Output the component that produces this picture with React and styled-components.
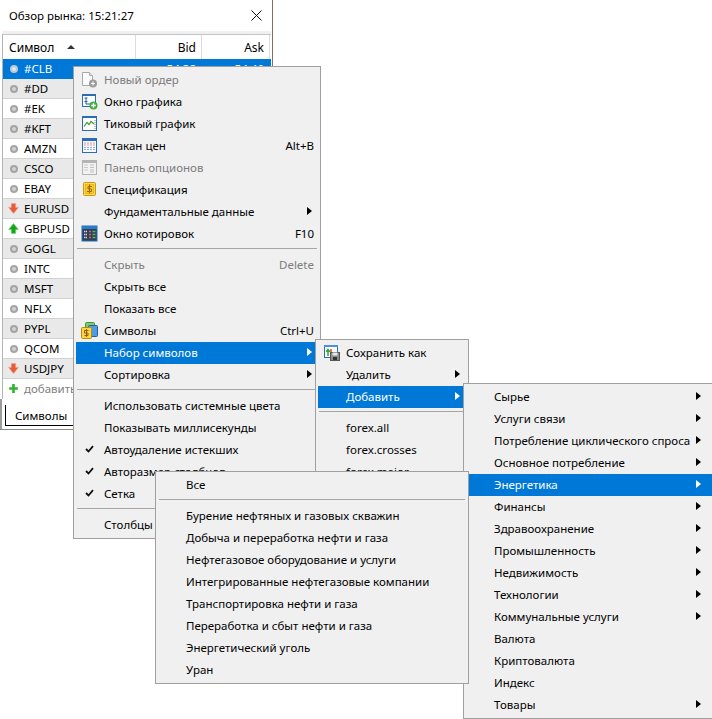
import React from 'react';
import styled, { createGlobalStyle } from 'styled-components';

const GlobalStyle = createGlobalStyle`
  html, body {
    margin: 0;
    padding: 0;
    background: #fff;
  }
`;

const Page = styled.div`
  position: relative;
  width: 712px;
  height: 719px;
  overflow: hidden;
  background: #fff;
  font-family: 'Noto Sans', 'Open Sans', sans-serif;
  font-size: 11.5px;
  color: #000;
`;

const Window = styled.div`
  width: 273px;
  height: 430px;
  box-sizing: border-box;
  display: flex;
  flex-direction: column;
  background: #fff;
  border-right: 1px solid #8d6a6a;
  border-bottom: 1px solid #8a8a8a;
`;

const TitleBar = styled.div`
  height: 31px;
  flex: none;
  display: flex;
  align-items: center;
  justify-content: space-between;
  padding: 0 10px 0 9px;
`;

const Table = styled.div`
  margin: 3px 0 0 2px;
  width: 268px;
  border-left: 1px solid #b4b4b4;
  box-shadow: 0 -3px 0 #f0f0f0;
`;

const HeaderRow = styled.div`
  height: 25px;
  display: grid;
  grid-template-columns: 133px 66px 68px;
  border-top: 1px solid #c4c4c4;
  box-sizing: border-box;
`;

const HeaderCell = styled.div`
  display: flex;
  align-items: center;
  justify-content: ${p => (p.$right ? 'flex-end' : 'flex-start')};
  padding: 0 5px 0 6px;
  border-right: 1px solid #dcdcdc;
  font-size: 12px;
`;

const SortArrow = styled.span`
  margin-left: 13px;
  width: 0;
  height: 0;
  border-left: 4px solid transparent;
  border-right: 4px solid transparent;
  border-bottom: 4px solid #333;
`;

const Row = styled.div`
  height: 20px;
  box-sizing: border-box;
  display: grid;
  grid-template-columns: 133px 66px 68px;
  align-items: center;
  background: ${p => (p.$selected ? '#0078d7' : p.$shade ? '#e9e9e9' : '#fff')};
  color: ${p => (p.$selected ? '#fff' : p.$muted ? '#808080' : '#000')};
  border-bottom: 1px solid ${p => (p.$selected ? '#0078d7' : p.$last ? '#fff' : '#d2d2d2')};
`;

const SymbolCell = styled.div`
  display: flex;
  align-items: center;
`;

const RowIcon = styled.span`
  width: 21px;
  display: flex;
  justify-content: center;
  flex: none;
`;

const Value = styled.div`
  text-align: right;
  padding-right: 6px;
`;

const Bullet = styled.span`
  width: 8px;
  height: 8px;
  box-sizing: border-box;
  border-radius: 50%;
  background: ${p => (p.$selected ? '#e6e6e6' : '#d2d2d2')};
  border: 2px solid ${p => (p.$selected ? '#b8c8d8' : '#a4a4a4')};
`;

const TabStrip = styled.div`
  flex: 1;
  display: flex;
  align-items: flex-start;
  padding: 6px 0 0 5px;
  border-left: 2px solid #9c9c9c;
`;

const Tab = styled.div`
  width: 90px;
  height: 20px;
  padding-left: 9px;
  display: flex;
  align-items: center;
  border-left: 1px solid #000;
  border-bottom: 1px solid #000;
  margin-left: -2px;
`;

const Menu = styled.div`
  position: absolute;
  left: ${p => p.$left}px;
  top: ${p => p.$top}px;
  width: ${p => p.$width}px;
  z-index: ${p => p.$layer};
  box-sizing: border-box;
  padding: 2px;
  background: #f0f0f0;
  border: 1px solid #a0a0a0;
`;

const Item = styled.div`
  position: relative;
  height: 22px;
  box-sizing: border-box;
  padding-bottom: 2px;
  display: flex;
  align-items: center;
  justify-content: space-between;
  background: ${p => (p.$active ? '#0078d7' : 'transparent')};
  color: ${p => (p.$active ? '#fff' : p.$disabled ? '#7c7c7c' : '#000')};
`;

const Label = styled.span`
  display: flex;
  align-items: center;
  white-space: nowrap;
`;

const IconSlot = styled.span`
  width: 26px;
  margin-right: 2px;
  height: 20px;
  flex: none;
  display: flex;
  align-items: center;
  justify-content: center;
`;

const Shortcut = styled.span`
  padding-right: 4px;
  color: inherit;
`;

const Arrow = styled.span`
  margin-right: ${p => p.$inset || 6}px;
  width: 0;
  height: 0;
  border-top: 4px solid transparent;
  border-bottom: 4px solid transparent;
  border-left: 5px solid ${p => (p.$active ? '#fff' : '#000')};
`;

const Separator = styled.div`
  height: 9px;
  box-sizing: border-box;
  padding: 3px 1px 0;

  &::before {
    content: '';
    display: block;
    height: 1px;
    background: #a6a6a6;
  }
`;

const CloseIcon = () => (
  <svg width="11" height="11" viewBox="0 0 11 11">
    <path d="M.5.5l10 10M10.500.5l-10 10" stroke="#111" strokeWidth="1" fill="none" />
  </svg>
);

const DownArrow = () => (
  <svg width="11" height="11" viewBox="0 0 10 10">
    <path d="M3 .5h4v3.500h2.500L5 9.500.5 4H3z" fill="#e8593a" stroke="#f2a490" strokeWidth=".6" />
  </svg>
);

const UpArrow = () => (
  <svg width="11" height="11" viewBox="0 0 10 10">
    <path d="M5 .5L9.500 6H7v3.500H3V6H.5z" fill="#16a516" stroke="#7fd27f" strokeWidth=".6" />
  </svg>
);

const PlusIcon = () => (
  <svg width="11" height="11" viewBox="0 0 10 10">
    <path d="M3.800 1h2.400v2.800H9v2.400H6.200V9H3.800V6.200H1V3.800h2.800z" fill="#2fb52f" />
  </svg>
);

const Check = () => (
  <svg width="9" height="8" viewBox="0 0 9 8">
    <path d="M1 4l2.500 2.500L8 1.200" stroke="#111" strokeWidth="1.800" fill="none" />
  </svg>
);

const Svg = ({ children }) => (
  <svg width="17" height="17" viewBox="0 0 17 17">{children}</svg>
);

const NewOrderIcon = () => (
  <Svg>
    <path d="M1.500 1.500h7l3 3v10h-10z" fill="#fbfbfb" stroke="#a8a8a8" />
    <path d="M8.500 1.500v3h3" fill="#e4e4e4" stroke="#a8a8a8" />
    <circle cx="12" cy="12.500" r="4" fill="#9c9c9c" />
    <path d="M12 10.500v4M10 12.500h4" stroke="#f4f4f4" strokeWidth="1.200" />
  </Svg>
);

const ChartIcon = () => (
  <Svg>
    <rect x="1.500" y="1.500" width="13" height="12" fill="#fff" stroke="#2a6db5" />
    <rect x="1" y="1" width="14" height="2" fill="#2a6db5" />
    <path d="M5 5v6h5M3.500 5h3M3.500 8.500h3" stroke="#1f5da8" fill="none" />
    <circle cx="12.500" cy="12.500" r="4" fill="#3fae3f" />
    <path d="M12.500 10.200v4.600M10.200 12.500h4.600" stroke="#fff" strokeWidth="1.400" />
  </Svg>
);

const TickIcon = () => (
  <Svg>
    <rect x="1.500" y="1.500" width="14" height="14" fill="#fdfdfd" stroke="#2a6db5" />
    <rect x="1" y="1" width="15" height="2" fill="#2a6db5" />
    <path d="M3 11.500l3-4 2 2 2-3 3 2.500" stroke="#3f9f2f" strokeWidth="1.200" fill="none" />
    <path d="M14 5v9" stroke="#8a8a8a" strokeDasharray="1 1" />
  </Svg>
);

const DepthIcon = () => (
  <Svg>
    <rect x="1.500" y="1.500" width="14" height="14" fill="#f4f7fb" stroke="#2a6db5" />
    <rect x="1" y="1" width="15" height="3" fill="#2a6db5" />
    <path d="M3 6h11M3 8h11" stroke="#e79b9b" strokeDasharray="2 1" />
    <path d="M3 10.500h11M3 12.500h11" stroke="#8fb0dc" strokeDasharray="2 1" />
  </Svg>
);

const OptionsIcon = () => (
  <Svg>
    <rect x="1.500" y="1.500" width="14" height="14" fill="#f2f2f2" stroke="#b4b4b4" />
    <rect x="1" y="1" width="15" height="3" fill="#b4b4b4" />
    <path d="M3.500 6h3M3.500 8.500h3M3.500 11h3" stroke="#a0a0a0" strokeDasharray="1 1" />
    <path d="M9.500 6h4M9.500 8.500h4M9.500 11h4M9.500 13h4" stroke="#8c8c8c" strokeDasharray="1 1" />
  </Svg>
);

const SpecIcon = () => (
  <Svg>
    <rect x="2.500" y="1.500" width="12" height="13" rx="1" fill="#ffd94a" stroke="#c79a16" />
    <rect x="4.500" y="3.500" width="8" height="9" fill="#f7c92e" stroke="#e3ab16" strokeWidth=".7" />
    <path d="M11 5.500H7v2.500h3.500v2.500H6M8.500 3.500v9" stroke="#9a6c08" fill="none" />
  </Svg>
);

const QuotesIcon = () => (
  <Svg>
    <rect x="1" y="1" width="15" height="15" fill="#2f3f58" stroke="#2a6db5" />
    <rect x="1" y="1" width="15" height="3" fill="#2a7cc7" />
    <path d="M3 6.500h3M3 9.500h3M3 12.500h3" stroke="#d8d8d8" strokeWidth="1.500" strokeDasharray="1.500 .5" />
    <path d="M8 6.500h2M8 9.500h2M8 12.500h2" stroke="#e26060" strokeWidth="1.500" />
    <path d="M11.500 6.500h3M11.500 9.500h3M11.500 12.500h3" stroke="#53b56a" strokeWidth="1.500" />
  </Svg>
);

const SymbolsIcon = () => (
  <Svg>
    <rect x="4.500" y=".5" width="9" height="8" rx="1" fill="#7ecb6a" stroke="#3a9a3a" />
    <rect x="7.500" y="3.500" width="9" height="11" rx="1" fill="#4f9ce0" stroke="#1f5da8" />
    <rect x=".5" y="5.500" width="10" height="11" rx="1" fill="#ffd24a" stroke="#b78a10" />
    <path d="M7.500 8.500h-4v2.500h3.500v2.500H3.500M5.500 7v8" stroke="#8a6408" fill="none" />
  </Svg>
);

const SaveAsIcon = () => (
  <Svg>
    <rect x="1.500" y="1.500" width="13" height="12" fill="#fff" stroke="#2a6db5" />
    <rect x="1" y="1" width="14" height="2" fill="#4b93d6" />
    <path d="M5 12V6M3.200 7.800L5 5.500l1.800 2.300" stroke="#2ea52e" strokeWidth="1.500" fill="none" />
    <path d="M8 5v5" stroke="#d84a3a" strokeWidth="1.500" />
    <rect x="7.500" y="8.500" width="9" height="8" fill="#8c8c8c" stroke="#555" />
    <rect x="9.500" y="8.500" width="5" height="3" fill="#e8e8e8" />
    <rect x="10" y="13" width="4" height="3" fill="#333" />
  </Svg>
);

const bullet = 'bullet';
const symbols = [
  ['#CLB', bullet], ['#DD', bullet], ['#EK', bullet], ['#KFT', bullet], ['AMZN', bullet],
  ['CSCO', bullet], ['EBAY', bullet], ['EURUSD', 'down'], ['GBPUSD', 'up'], ['GOGL', bullet],
  ['INTC', bullet], ['MSFT', bullet], ['NFLX', bullet], ['PYPL', bullet], ['QCOM', bullet],
  ['USDJPY', 'down'],
];

const mainMenu = [
  { text: 'Новый ордер', icon: <NewOrderIcon />, disabled: true },
  { text: 'Окно графика', icon: <ChartIcon /> },
  { text: 'Тиковый график', icon: <TickIcon /> },
  { text: 'Стакан цен', icon: <DepthIcon />, shortcut: 'Alt+B' },
  { text: 'Панель опционов', icon: <OptionsIcon />, disabled: true },
  { text: 'Спецификация', icon: <SpecIcon /> },
  { text: 'Фундаментальные данные', sub: true },
  { text: 'Окно котировок', icon: <QuotesIcon />, shortcut: 'F10' },
  { sep: true },
  { text: 'Скрыть', shortcut: 'Delete', disabled: true },
  { text: 'Скрыть все' },
  { text: 'Показать все' },
  { text: 'Символы', icon: <SymbolsIcon />, shortcut: 'Ctrl+U' },
  { text: 'Набор символов', sub: true, active: true },
  { text: 'Сортировка', sub: true },
  { sep: true },
  { text: 'Использовать системные цвета' },
  { text: 'Показывать миллисекунды' },
  { text: 'Автоудаление истекших', icon: <Check /> },
  { text: 'Авторазмер столбцов', icon: <Check /> },
  { text: 'Сетка', icon: <Check /> },
  { sep: true },
  { text: 'Столбцы', sub: true },
];

const setMenu = [
  { text: 'Сохранить как', icon: <SaveAsIcon /> },
  { text: 'Удалить', sub: true },
  { text: 'Добавить', sub: true, active: true },
  { sep: true },
  { text: 'forex.all' },
  { text: 'forex.crosses' },
  { text: 'forex.major' },
];

const sectorMenu = [
  { text: 'Сырье', sub: true },
  { text: 'Услуги связи', sub: true },
  { text: 'Потребление циклического спроса', sub: true },
  { text: 'Основное потребление', sub: true },
  { text: 'Энергетика', sub: true, active: true },
  { text: 'Финансы', sub: true },
  { text: 'Здравоохранение', sub: true },
  { text: 'Промышленность', sub: true },
  { text: 'Недвижимость', sub: true },
  { text: 'Технологии', sub: true },
  { text: 'Коммунальные услуги', sub: true },
  { text: 'Валюта' },
  { text: 'Криптовалюта' },
  { text: 'Индекс' },
  { text: 'Товары', sub: true },
];

const energyMenu = [
  { text: 'Все' },
  { sep: true },
  { text: 'Бурение нефтяных и газовых скважин' },
  { text: 'Добыча и переработка нефти и газа' },
  { text: 'Нефтегазовое оборудование и услуги' },
  { text: 'Интегрированные нефтегазовые компании' },
  { text: 'Транспортировка нефти и газа' },
  { text: 'Переработка и сбыт нефти и газа' },
  { text: 'Энергетический уголь' },
  { text: 'Уран' },
];

function MenuItems({ items, arrowInset }) {
  return items.map((item, i) =>
    item.sep ? (
      <Separator key={i} />
    ) : (
      <Item key={i} $active={item.active} $disabled={item.disabled}>
        <Label>
          <IconSlot>{item.icon}</IconSlot>
          {item.text}
        </Label>
        {item.shortcut && <Shortcut>{item.shortcut}</Shortcut>}
        {item.sub && <Arrow $active={item.active} $inset={arrowInset} />}
      </Item>
    )
  );
}

function SymbolIcon({ kind, selected }) {
  if (kind === 'down') return <DownArrow />;
  if (kind === 'up') return <UpArrow />;
  return <Bullet $selected={selected} />;
}

export default function App() {
  return (
    <Page>
      <GlobalStyle />
      <Window>
        <TitleBar>
          <span>Обзор рынка: 15:21:27</span>
          <CloseIcon />
        </TitleBar>
        <Table>
          <HeaderRow>
            <HeaderCell>
              Символ
              <SortArrow />
            </HeaderCell>
            <HeaderCell $right>Bid</HeaderCell>
            <HeaderCell $right>Ask</HeaderCell>
          </HeaderRow>
          {symbols.map(([name, kind], i) => (
            <Row key={name} $selected={i === 0} $shade={i % 2 === 1}>
              <SymbolCell>
                <RowIcon>
                  <SymbolIcon kind={kind} selected={i === 0} />
                </RowIcon>
                {name}
              </SymbolCell>
              {i === 0 && <Value>54.38</Value>}
              {i === 0 && <Value>54.40</Value>}
            </Row>
          ))}
          <Row $muted $last>
            <SymbolCell>
              <RowIcon>
                <PlusIcon />
              </RowIcon>
              добавить
            </SymbolCell>
          </Row>
        </Table>
        <TabStrip>
          <Tab>Символы</Tab>
        </TabStrip>
      </Window>

      <Menu $left={73} $top={66} $width={248} $layer={1}>
        <MenuItems items={mainMenu} />
      </Menu>
      <Menu $left={315} $top={339} $width={154} $layer={2}>
        <MenuItems items={setMenu} />
      </Menu>
      <Menu $left={463} $top={383} $width={252} $layer={3}>
        <MenuItems items={sectorMenu} arrowInset={11} />
      </Menu>
      <Menu $left={155} $top={471} $width={314} $layer={4}>
        <MenuItems items={energyMenu} />
      </Menu>
    </Page>
  );
}
